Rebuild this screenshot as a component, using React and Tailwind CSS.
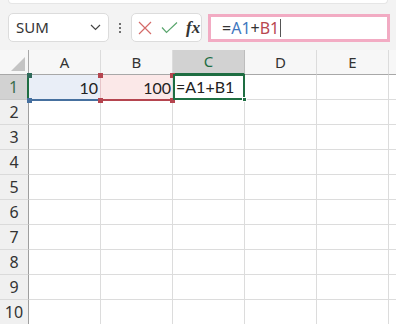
import React from "react";

const cols = ["A", "B", "C", "D", "E", ""];
const rows = [1, 2, 3, 4, 5, 6, 7, 8, 9, 10];

function Handle({ className }) {
  return <div className={"absolute w-[5px] h-[5px] " + className} />;
}

export default function App() {
  return (
    <div className="w-[396px] h-[324px] overflow-hidden bg-white font-['Noto_Sans',sans-serif] text-[#222]">
      {/* Top bar */}
      <div className="h-[50px] bg-[#f3f3f3] relative">
        <div className="mx-[8px] h-[4px] bg-white rounded-b-[6px] border-x border-b border-[#e6e6e6]" />
        <div className="flex items-center mt-[9px] ml-[8px]">
          <div className="w-[101px] h-[29px] bg-white border border-[#dcdcdc] rounded-[5px] flex items-center pl-[7px] pr-[6px]">
            <span className="text-[15px] text-[#333] leading-none flex-1">SUM</span>
            <svg width="11" height="7" viewBox="0 0 11 7" className="mr-[1px]">
              <path d="M1 1 L5.5 5.5 L10 1" fill="none" stroke="#444" strokeWidth="1.2" />
            </svg>
          </div>
          <div className="w-[22px] flex flex-col items-center gap-[2px]">
            <div className="w-[2px] h-[2px] bg-[#444] rounded-full" />
            <div className="w-[2px] h-[2px] bg-[#444] rounded-full" />
            <div className="w-[2px] h-[2px] bg-[#444] rounded-full" />
          </div>
          <div className="w-[71px] h-[29px] bg-white border border-[#dcdcdc] rounded-[5px] flex items-center pl-[6px]">
            <svg width="14" height="14" viewBox="0 0 14 14">
              <path d="M1 1 L13 13 M13 1 L1 13" stroke="#d46a69" strokeWidth="1.2" fill="none" />
            </svg>
            <svg width="17" height="13" viewBox="0 0 17 13" className="ml-[9px]">
              <path d="M1 6.5 L5.5 11.5 L16 1.5" stroke="#5aa66e" strokeWidth="1.2" fill="none" />
            </svg>
            <span className="ml-[8px] font-['Liberation_Serif',serif] italic font-bold text-[17px] leading-none text-[#333]">fx</span>
          </div>
          <div className="ml-[6px] w-[182px] h-[28px] bg-white border-[3px] border-[#f2abc3] flex items-center pl-[11px] text-[16px] leading-none">
            <span className="text-[#333]">=</span>
            <span className="text-[#3f78c0]">A1</span>
            <span className="text-[#333]">+</span>
            <span className="text-[#b8464f]">B1</span>
            <span className="ml-[1px] w-[1px] h-[18px] bg-[#555]" />
          </div>
        </div>
      </div>

      {/* Grid */}
      <div className="grid grid-cols-[29px_repeat(6,72px)] font-['Noto_Sans',sans-serif]">
        <div className="h-[25px] bg-[#f7f7f7] border-r border-b border-[#a8a8a8] relative">
          <svg width="14" height="14" viewBox="0 0 14 14" className="absolute right-[3px] bottom-[3px]">
            <path d="M14 0 L14 14 L0 14 Z" fill="#c4c4c4" />
          </svg>
        </div>
        {cols.map((c, i) =>
          c === "C" ? (
            <div key={i} className="h-[25px] bg-[#d2d2d2] border-r border-b-2 border-b-[#1e6e42] border-r-[#bdbdbd] flex items-center justify-center text-[15px] text-[#1e6e42]">
              {c}
            </div>
          ) : (
            <div key={i} className="h-[25px] bg-[#f7f7f7] border-r border-r-[#dcdcdc] border-b border-b-[#a8a8a8] flex items-center justify-center text-[15px] text-[#333]">
              {c}
            </div>
          )
        )}

        {rows.map((r) => (
          <React.Fragment key={r}>
            {r === 1 ? (
              <div className="h-[25px] bg-[#d2d2d2] border-r-2 border-r-[#1e6e42] border-b border-b-[#c8c8c8] flex items-center justify-center text-[16px] text-[#3b6e4c]">
                {r}
              </div>
            ) : (
              <div className="h-[25px] bg-[#f0f0f0] border-r border-r-[#9e9e9e] border-b border-b-[#dadada] flex items-center justify-center text-[16px] text-[#333]">
                {r}
              </div>
            )}
            {cols.map((c, i) => {
              if (r === 1 && c === "A") {
                return (
                  <div key={i} className="h-[25px] bg-[#e9eef7] border-r border-r-[#e6c4c8] relative flex items-center justify-end pr-[2px] text-[16px] font-['Lato',sans-serif]">
                    10
                    <div className="absolute left-0 right-[-1px] bottom-[-1px] h-[2px] bg-[#46709f]" />
                    <Handle className="left-[-2px] top-[-2px] bg-[#2f6a5a]" />
                    <Handle className="left-[-2px] bottom-[-3px] bg-[#46709f]" />
                  </div>
                );
              }
              if (r === 1 && c === "B") {
                return (
                  <div key={i} className="h-[25px] bg-[#fbe8e8] border-r border-r-[#dcdcdc] relative flex items-center justify-end pr-[1px] text-[16px] font-['Lato',sans-serif]">
                    100
                    <div className="absolute left-0 right-0 bottom-[-1px] h-[2px] bg-[#b5454f]" />
                    <Handle className="left-[-3px] top-[-2px] bg-[#b5454f]" />
                    <Handle className="left-[-3px] bottom-[-3px] bg-[#b5454f]" />
                    <Handle className="right-[-3px] top-[-2px] bg-[#b5454f]" />
                    <Handle className="right-[-3px] bottom-[-3px] bg-[#b5454f]" />
                  </div>
                );
              }
              if (r === 1 && c === "C") {
                return (
                  <div key={i} className="h-[25px] bg-white border-r border-b border-[#dcdcdc] relative flex items-center pl-[3px] text-[16px] font-['Lato',sans-serif]">
                    =A1+B1
                    <div className="absolute left-0 top-[-1px] right-[-1px] bottom-[-1px] border-2 border-[#1e6e42]" />
                    <Handle className="right-[-3px] bottom-[-3px] bg-[#1e6e42] border border-white" />
                  </div>
                );
              }
              return (
                <div key={i} className="h-[25px] bg-white border-r border-b border-[#dcdcdc]" />
              );
            })}
          </React.Fragment>
        ))}
      </div>
    </div>
  );
}
